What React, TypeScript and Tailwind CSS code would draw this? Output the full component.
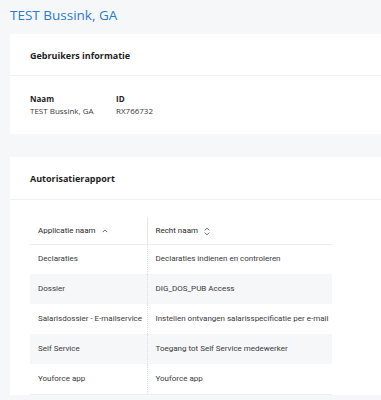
const rows = [
  { app: 'Declaraties', recht: 'Declaraties indienen en controleren' },
  { app: 'Dossier', recht: 'DIG_DOS_PUB Access' },
  { app: 'Salarisdossier - E-mailservice', recht: 'Instellen ontvangen salarisspecificatie per e-mail' },
  { app: 'Self Service', recht: 'Toegang tot Self Service medewerker' },
  { app: 'Youforce app', recht: 'Youforce app' },
];

function SortUp() {
  return (
    <svg className="w-[6px] h-[4px] ml-[6px]" viewBox="0 0 8 5" fill="none" stroke="#666" strokeWidth={1.3}>
      <path d="M1 4l3-3 3 3" />
    </svg>
  );
}

function SortBoth() {
  return (
    <svg className="w-[6px] h-[9px] ml-[6px]" viewBox="0 0 8 11" fill="none" stroke="#666" strokeWidth={1.3}>
      <path d="M1 4l3-3 3 3M1 7l3 3 3-3" />
    </svg>
  );
}

export default function App() {
  return (
    <div className="min-h-screen w-[381px] h-[400px] overflow-hidden bg-[#f6f7f9] font-['Open_Sans',sans-serif]">
      {/* Title */}
      <h1 className="pl-[10px] pt-[4px] h-[34px] text-[13.5px] leading-[22px] text-[#2a7bd0]">TEST Bussink, GA</h1>

      {/* Gebruikers informatie */}
      <div className="ml-[10px] w-[400px] bg-white">
        <div className="h-[42px] px-[20px] pt-[2px] flex items-center border-b border-[#f0f1f3]">
          <h2 className="text-[9px] font-bold text-[#1e1e1e]">Gebruikers informatie</h2>
        </div>
        <div className="px-[20px] pt-[17px] pb-[17px] flex text-[8px] leading-[12px]">
          <div className="w-[86px]">
            <p className="font-bold text-[#1e1e1e]">Naam</p>
            <p className="text-[#3a3a3a]">TEST Bussink, GA</p>
          </div>
          <div>
            <p className="font-bold text-[#1e1e1e]">ID</p>
            <p className="text-[#3a3a3a]">RX766732</p>
          </div>
        </div>
      </div>

      {/* Autorisatierapport */}
      <div className="ml-[10px] mt-[23px] w-[400px] bg-white">
        <div className="h-[43px] px-[20px] pt-[2px] flex items-center border-b border-[#f0f1f3]">
          <h2 className="text-[9px] font-bold text-[#1e1e1e]">Autorisatierapport</h2>
        </div>
        <div className="px-[20px] pt-[17px] font-['Roboto',sans-serif] text-[8px] text-[#3a3a3a]">
          <table className="w-[302px] table-fixed border-collapse">
            <thead>
              <tr className="h-[27px] border-b border-[#eceef1]">
                <th className="w-[117px] pl-[8px] pt-[2px] text-left font-normal text-[#2a2a2a] border-r border-[#e6e8eb]">
                  <span className="flex items-center">Applicatie naam<SortUp /></span>
                </th>
                <th className="pl-[8px] pt-[2px] text-left font-normal text-[#2a2a2a]">
                  <span className="flex items-center">Recht naam<SortBoth /></span>
                </th>
              </tr>
            </thead>
            <tbody>
              {rows.map((r, i) => (
                <tr key={r.app} className={i % 2 === 1 ? 'h-[30px] bg-[#f6f7f9]' : 'h-[30px] bg-white'}>
                  <td className="pl-[8px] border-r border-dotted border-[#dcdfe3] whitespace-nowrap">{r.app}</td>
                  <td className="pl-[8px] whitespace-nowrap">{r.recht}</td>
                </tr>
              ))}
              <tr className="h-[1px] border-t border-[#eceef1]"><td colSpan={2}></td></tr>
            </tbody>
          </table>
        </div>
      </div>
    </div>
  );
}
